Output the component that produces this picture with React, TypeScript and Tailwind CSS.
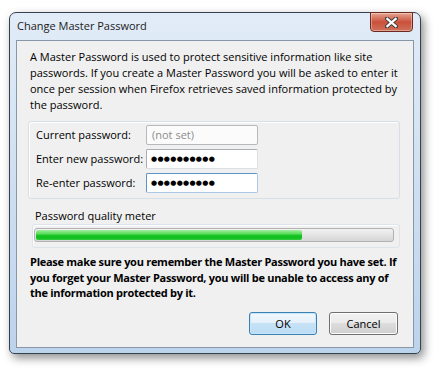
import React from "react";

function CloseGlyph() {
  return (
    <svg width="13" height="11" viewBox="0 0 13 11">
      <path d="M2 1.5 L11 9.5 M11 1.5 L2 9.5" stroke="#3a3a3a" strokeWidth="4" strokeLinecap="square" />
      <path d="M2.3 1.8 L10.7 9.2 M10.7 1.8 L2.3 9.2" stroke="#ffffff" strokeWidth="2.2" strokeLinecap="square" />
    </svg>
  );
}

function Dots() {
  return (
    <span className="font-['DejaVu_Sans',sans-serif] text-[7px] tracking-[0.3px] leading-none text-black">
      ●●●●●●●●●●
    </span>
  );
}

export default function App() {
  return (
    <div className="w-[434px] h-[369px] bg-white pl-[9px] pt-[12px] overflow-hidden font-['Open_Sans',sans-serif] text-[11px] text-black">
      <div className="w-[412px] h-[342px] flex flex-col rounded-t-[7px] rounded-b-[5px] border border-[#34424f] bg-gradient-to-b from-[#e2ecf8] via-[#cfdff1] to-[#bcd3ec] shadow-[3px_4px_10px_rgba(0,0,0,0.45)]">
        {/* title bar */}
        <div className="h-[27px] flex items-start justify-between pl-[7px] pr-[7px]">
          <span className="mt-[5px] leading-[16px] text-[#1a1a1a] whitespace-nowrap">Change Master Password</span>
          <div className="-mt-px w-[43px] h-[20px] rounded-b-[4px] border border-[#6e2a1e] bg-gradient-to-b from-[#e5a593] via-[#c9503a] to-[#d0705a] shadow-[inset_0_0_0_1px_rgba(255,255,255,0.35)] flex items-center justify-center">
            <CloseGlyph />
          </div>
        </div>
        {/* client */}
        <div className="mx-[6px] mb-[5px] flex-1 border border-[#8797a8] bg-[#f0f0f0] flex flex-col">
          <div className="ml-[13px] mt-[8px] leading-[16px] whitespace-nowrap">
            A Master Password is used to protect sensitive information like site
            <br />
            passwords. If you create a Master Password you will be asked to enter it
            <br />
            once per session when Firefox retrieves saved information protected by
            <br />
            the password.
          </div>

          <div className="ml-[11px] mt-[8px] w-[372px] rounded-[3px] border border-[#d5dfe5] shadow-[inset_1px_1px_0_#ffffff] pl-[7px] pt-[3px] pb-[5px] flex flex-col gap-[4px] whitespace-nowrap">
            <div className="flex items-center h-[20px]">
              <span className="w-[110px]">Current password:</span>
              <div className="w-[112px] h-[20px] rounded-[2px] border border-[#b5b8bd] bg-[#fbfbfb] pl-[5px] flex items-center text-[#8c8c8c]">
                (not set)
              </div>
            </div>
            <div className="flex items-center h-[20px]">
              <span className="w-[110px]">Enter new password:</span>
              <div className="w-[112px] h-[20px] rounded-[2px] border border-[#abadb3] border-b-[#dbdfe6] border-r-[#dbdfe6] bg-white pl-[4px] flex items-center">
                <Dots />
              </div>
            </div>
            <div className="flex items-center h-[20px]">
              <span className="w-[110px]">Re-enter password:</span>
              <div className="w-[112px] h-[20px] rounded-[2px] border border-[#5c93c9] border-b-[#a9c8e8] border-r-[#a9c8e8] bg-white pl-[4px] flex items-center">
                <Dots />
              </div>
            </div>
          </div>

          <div className="ml-[18px] mt-[9px] leading-[16px]">Password quality meter</div>
          <div className="ml-[15px] w-[368px] rounded-[3px] border border-[#dde4ea] shadow-[inset_1px_1px_0_#ffffff] pl-[1px] pt-[3px] pb-[5px]">
            <div className="w-[360px] h-[14px] rounded-[3px] border border-[#b2b2b2] bg-gradient-to-b from-[#f2f2f2] to-[#d6d6d6] p-px">
              <div className="h-full w-[74.7%] rounded-[2px] bg-[linear-gradient(to_bottom,#a4eea4_0%,#55dc55_40%,#16c423_55%,#12bd20_80%,#2fd03a_100%)]" />
            </div>
          </div>

          <div className="ml-[13px] mt-[6px] font-bold leading-[15.5px] tracking-[-0.28px] whitespace-nowrap">
            Please make sure you remember the Master Password you have set. If
            <br />
            you forget your Master Password, you will be unable to access any of
            <br />
            the information protected by it.
          </div>

          <div className="mt-[11.5px] flex justify-end gap-[12px] pr-[15px]">
            <button className="w-[68px] h-[23px] rounded-[3px] border border-[#3c7fb1] bg-[linear-gradient(to_bottom,#f2f8fc_0%,#e5f1fb_45%,#c6e2f6_50%,#bcdcf3_100%)] shadow-[inset_0_0_0_1px_#c5e6fb] leading-none">
              OK
            </button>
            <button className="w-[69px] h-[23px] rounded-[3px] border border-[#707070] bg-[linear-gradient(to_bottom,#f2f2f2_0%,#ebebeb_45%,#dddddd_50%,#cfcfcf_100%)] shadow-[inset_0_0_0_1px_#fcfcfc] leading-none">
              Cancel
            </button>
          </div>
        </div>
      </div>
    </div>
  );
}
